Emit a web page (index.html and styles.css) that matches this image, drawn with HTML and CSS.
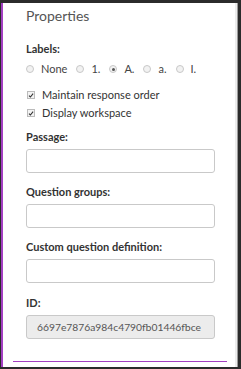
FILE: index.html
```html
<!DOCTYPE html>
<html>
<head>
<meta charset="utf-8">
<link rel="stylesheet" href="styles.css">
</head>
<body>
<div class="frame">
  <div class="panel">
    <h2 class="title">Properties</h2>
    <div class="label labels-head">Labels:</div>
    <div class="radio-row">
      <span class="opt"><span class="radio"></span>None</span>
      <span class="opt"><span class="radio"></span>1.</span>
      <span class="opt"><span class="radio on"></span>A.</span>
      <span class="opt"><span class="radio"></span>a.</span>
      <span class="opt"><span class="radio"></span>I.</span>
    </div>
    <div class="check-row"><span class="check"><svg viewBox="0 0 8 8" width="7" height="7"><path d="M1.3 4.2 L3.2 6 L6.8 1.6" fill="none" stroke="#333" stroke-width="1.5"/></svg></span>Maintain response order</div>
    <div class="check-row"><span class="check"><svg viewBox="0 0 8 8" width="7" height="7"><path d="M1.3 4.2 L3.2 6 L6.8 1.6" fill="none" stroke="#333" stroke-width="1.5"/></svg></span>Display workspace</div>
    <div class="field first">
      <div class="label">Passage:</div>
      <div class="input"></div>
    </div>
    <div class="field">
      <div class="label">Question groups:</div>
      <div class="input"></div>
    </div>
    <div class="field">
      <div class="label">Custom question definition:</div>
      <div class="input"></div>
    </div>
    <div class="field last">
      <div class="label">ID:</div>
      <div class="input readonly">6697e7876a984c4790fb01446fbce</div>
    </div>
    <div class="rule"></div>
  </div>
</div>
</body>
</html>
```

FILE: styles.css
```css
html, body {
  margin: 0;
  padding: 0;
  background: #2b2b2b;
  width: 241px;
  height: 369px;
  overflow: hidden;
}
.frame {
  margin: 3px 3px 0 1px;
  height: 364px;
  background: #fff;
  border-left: 2px solid #a33fc2;
  border-right: 1px solid #9a9a9a;
  box-shadow: inset -2px 0 0 #ececec;
  font-family: Lato, "Open Sans", sans-serif;
  color: #333;
}
.panel {
  padding: 0 0 0 23px;
}
.title {
  margin: 0;
  padding-top: 4px;
  font-size: 14px;
  font-weight: 400;
  color: #555;
  line-height: 18px;
}
.label {
  font-size: 11px;
  font-weight: 700;
  color: #333;
  line-height: 14px;
}
.labels-head {
  margin-top: 17px;
}
.radio-row {
  display: flex;
  align-items: center;
  margin-top: 6px;
  font-size: 11px;
  line-height: 14px;
  color: #444;
  gap: 9px;
}
.opt {
  display: flex;
  align-items: center;
}
.radio {
  width: 6px;
  height: 6px;
  border: 1px solid #c8c8c8;
  border-radius: 50%;
  background: #f2f2f2;
  margin-right: 7px;
  position: relative;
}
.radio.on::after {
  content: "";
  position: absolute;
  left: 1.5px;
  top: 1.5px;
  width: 3px;
  height: 3px;
  border-radius: 50%;
  background: #555;
}
.check-row {
  display: flex;
  align-items: center;
  font-size: 11px;
  line-height: 14px;
  color: #333;
  margin-top: 4px;
}
.radio-row + .check-row {
  margin-top: 12px;
}
.check {
  width: 6px;
  height: 6px;
  border: 1px solid #bbb;
  background: #f3f3f3;
  margin: 0 7px 0 1px;
  display: flex;
  align-items: center;
  justify-content: center;
}
.field {
  margin-top: 12px;
}
.field.first {
  margin-top: 10px;
}
.field.last {
  margin-top: 13px;
}
.input {
  margin-top: 5px;
  width: 187px;
  height: 22px;
  border: 1px solid #c9c9c9;
  border-radius: 3px;
  background: #fff;
}
.readonly {
  background: #ececec;
  color: #555;
  font-size: 10.3px;
  line-height: 22px;
  text-indent: 10px;
  white-space: nowrap;
  overflow: hidden;
}
.rule {
  margin: 22px 0 0 -13px;
  width: 214px;
  height: 0;
  border-top: 1px solid #a33fc2;
}
```
